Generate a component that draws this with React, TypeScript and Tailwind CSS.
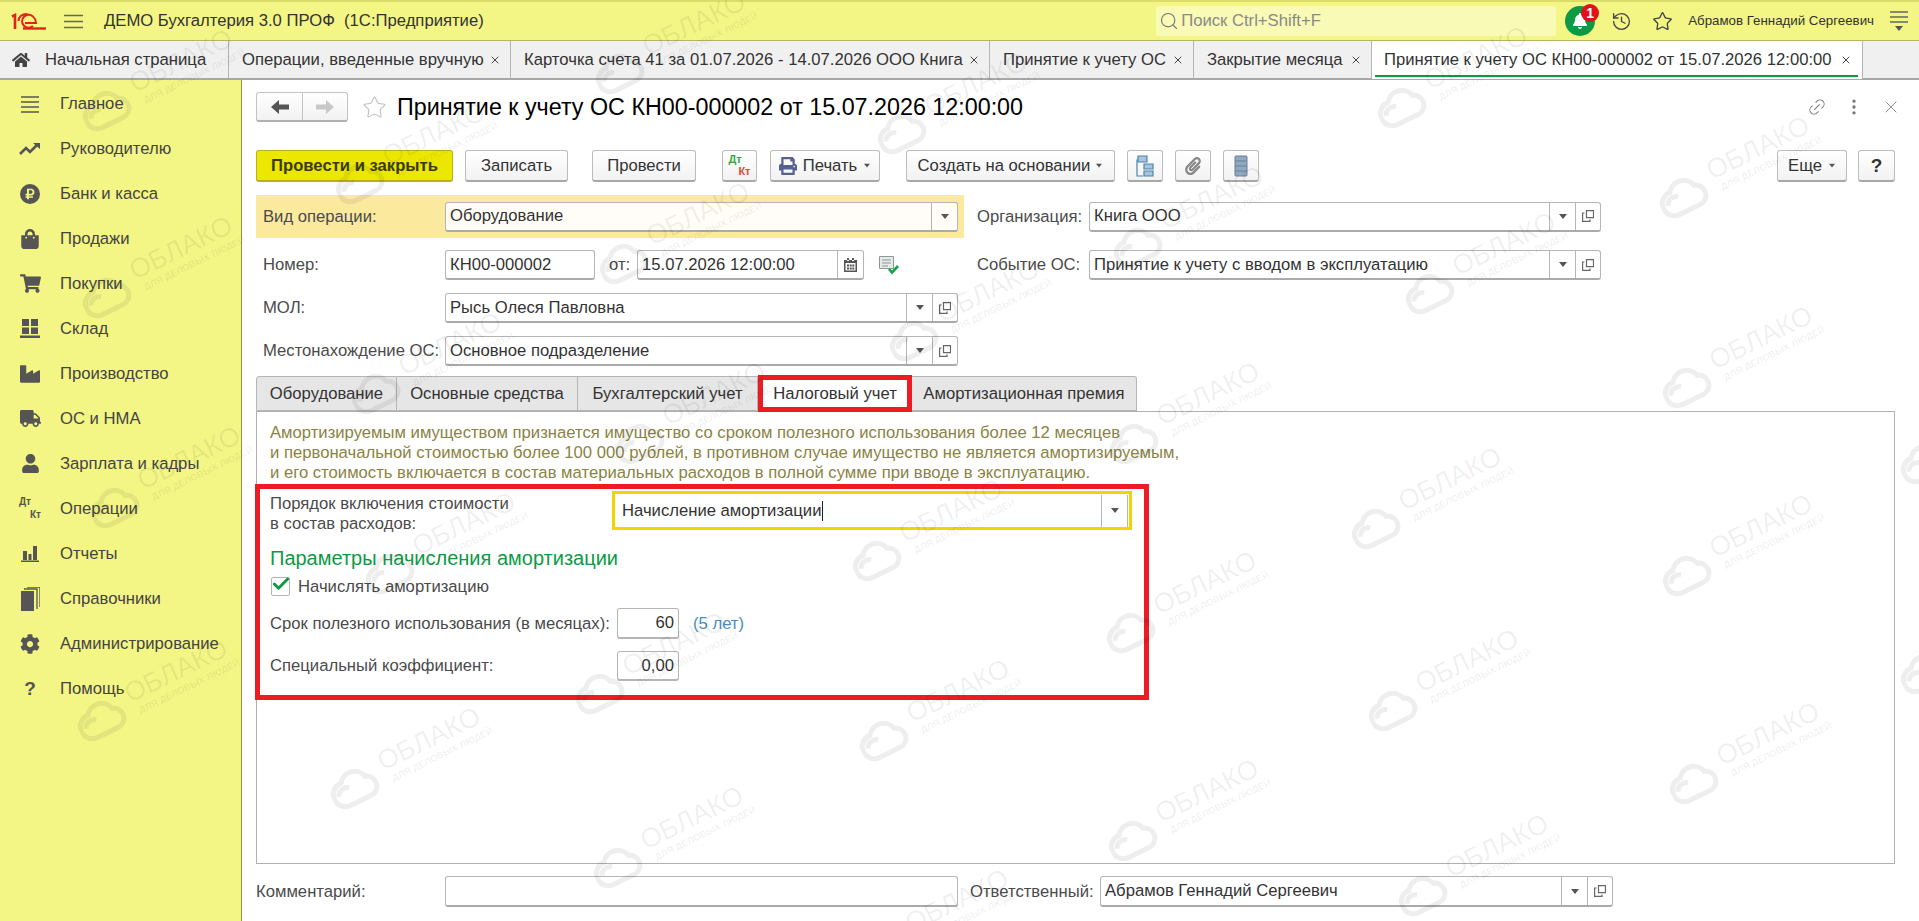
import type { ReactNode } from "react";
import { History, Link2, MoreVertical, Star, X, Check, Search } from "lucide-react";
import {
  FaBell,
  FaCog,
  FaHome,
  FaIndustry,
  FaPaperclip,
  FaPrint,
  FaRubleSign,
  FaShoppingBag,
  FaShoppingCart,
  FaTruck,
  FaUser,
} from "react-icons/fa";

const ink = "#555555";

const MenuLines = () => (
  <svg width="20" height="18" viewBox="0 0 20 18" fill="none" stroke={ink} strokeWidth="1.6">
    <path d="M1 2h18M1 7h18M1 12h18M1 17h18" />
  </svg>
);

const Trend = () => (
  <svg width="22" height="14" viewBox="0 0 22 14" fill="none" stroke={ink} strokeWidth="2.6">
    <path d="M1 12l6-6 4 4 7-7" />
    <path d="M14 1h7v6z" fill={ink} stroke="none" />
  </svg>
);

const Ruble = () => (
  <span className="w-[20px] h-[20px] rounded-full bg-[#555555] flex items-center justify-center text-[#f3f585]">
    <FaRubleSign size={12} />
  </span>
);

const Warehouse = () => (
  <svg width="20" height="19" viewBox="0 0 20 19" fill={ink}>
    <path d="M2 0h7v7H2zM11 0h7v7h-7zM2 8.500h7v6.500H2zM11 8.500h7V15h-7zM0 16.500h20V19H0z" />
  </svg>
);

const Bars = () => (
  <svg width="18" height="17" viewBox="0 0 18 17" fill={ink}>
    <path d="M2 6h4v9H2zM7.500 9h3v6h-3zM12 1h4v14h-4zM0 15.500h18V17H0z" />
  </svg>
);

const Pages = () => (
  <svg width="19" height="24" viewBox="0 0 19 24" fill="none">
    <path d="M0 4h13v20H0z" fill={ink} />
    <path d="M3 2h13v20M6 0h13v20" stroke={ink} strokeWidth="1.300" />
  </svg>
);

const DtKt = ({ green = ink, red = ink, size = "text-[10px]" }: { green?: string; red?: string; size?: string }) => (
  <span className={`relative block w-[22px] h-[23px] font-bold leading-none ${size}`}>
    <span className="absolute left-0 top-0" style={{ color: green }}>
      Дт
    </span>
    <span className="absolute right-0 bottom-0" style={{ color: red }}>
      Кт
    </span>
  </span>
);

const sidebar: { label: string; icon: ReactNode }[] = [
  { label: "Главное", icon: <MenuLines /> },
  { label: "Руководителю", icon: <Trend /> },
  { label: "Банк и касса", icon: <Ruble /> },
  { label: "Продажи", icon: <FaShoppingBag size={20} color={ink} /> },
  { label: "Покупки", icon: <FaShoppingCart size={21} color={ink} /> },
  { label: "Склад", icon: <Warehouse /> },
  { label: "Производство", icon: <FaIndustry size={20} color={ink} /> },
  { label: "ОС и НМА", icon: <FaTruck size={21} color={ink} /> },
  { label: "Зарплата и кадры", icon: <FaUser size={19} color={ink} /> },
  { label: "Операции", icon: <DtKt /> },
  { label: "Отчеты", icon: <Bars /> },
  { label: "Справочники", icon: <Pages /> },
  { label: "Администрирование", icon: <FaCog size={20} color={ink} /> },
  { label: "Помощь", icon: <span className="text-[19px] font-bold text-[#555555]">?</span> },
];

const tabs = [
  { label: "Операции, введенные вручную", w: "w-[282px]" },
  { label: "Карточка счета 41 за 01.07.2026 - 14.07.2026 ООО Книга", w: "w-[479px]" },
  { label: "Принятие к учету ОС", w: "w-[204px]" },
  { label: "Закрытие месяца", w: "w-[178px]" },
];

// centre of the word on the page
const marks = [
  [180, 60], [433, 133], [693, 23], [180, 247], [975, 83], [697, 213], [1211, 197], [987, 290],
  [1475, 57], [1757, 147], [1503, 243], [1760, 337], [188, 457], [449, 343], [463, 523], [175, 670],
  [673, 643], [713, 393], [950, 510], [1204, 582], [957, 690], [1207, 393], [1449, 478], [1760, 525],
  [1466, 660], [1767, 733], [428, 738], [691, 817], [1206, 790], [1496, 845], [956, 900], [1998, 413], [1998, 623],
];

function Watermark({ x, y }: { x: number; y: number }) {
  return (
    <div
      className="absolute flex items-center gap-[8px] w-[190px] h-[40px] -rotate-[26deg] origin-[113px_14px] text-black/[0.065]"
      style={{ left: x - 113, top: y - 14 }}
    >
      <svg width="50" height="40" viewBox="0 0 54 42" fill="none" stroke="currentColor" strokeWidth="5.500" className="shrink-0 mt-[10px]">
        <path d="M14 38h26a11 11 0 0 0 3-21.500A15 15 0 0 0 16 12a13 13 0 0 0-2 26zM8 24a9 9 0 0 1 14-4" />
      </svg>
      <div className="leading-none whitespace-nowrap">
        <div className="text-[27px] leading-[28px]">ОБЛАКО</div>
        <div className="text-[9.500px] leading-[11px] ml-[5px] font-bold">ДЛЯ ДЕЛОВЫХ ЛЮДЕЙ</div>
      </div>
    </div>
  );
}

const Caret = () => (
  <span className="block w-0 h-0 border-l-[4px] border-r-[4px] border-t-[5px] border-l-transparent border-r-transparent border-t-[#555555]" />
);

const OpenIcon = () => (
  <svg width="12" height="12" viewBox="0 0 12 12" fill="none" stroke="#666666" strokeWidth="1.200">
    <path d="M4.500 .6h7v7h-7zM2.500 3H.6v8.400H8V9.500" />
  </svg>
);

function Field({
  w,
  value = "",
  pick = false,
  open = false,
  tall = false,
  children,
}: {
  w: string;
  value?: string;
  pick?: boolean;
  open?: boolean;
  tall?: boolean;
  children?: ReactNode;
}) {
  return (
    <div
      className={`${w} ${tall ? "h-[31px]" : "h-[30px]"} shrink-0 flex items-stretch bg-white/90 border border-[#b5b5b5] border-b-[2px] border-b-[#aaaaaa] rounded-[3px] text-[#333333]`}
    >
      <div className="flex-1 min-w-0 flex items-center pl-[4px] whitespace-nowrap overflow-hidden">{value}</div>
      {pick && (
        <div className="w-[26px] border-l border-[#b5b5b5] flex items-center justify-center">
          <Caret />
        </div>
      )}
      {open && (
        <div className="w-[25px] border-l border-[#b5b5b5] flex items-center justify-center">
          <OpenIcon />
        </div>
      )}
      {children}
    </div>
  );
}

function Btn({ w, children, className = "" }: { w: string; children: ReactNode; className?: string }) {
  return (
    <button
      className={`${w} h-[32px] shrink-0 flex items-center justify-center gap-[6px] rounded-[3px] border border-[#bdbdbd] border-b-[2px] border-b-[#a8a8a8] bg-gradient-to-b from-white to-[#f2f2f2] text-[#333333] ${className}`}
    >
      {children}
    </button>
  );
}

const Label = ({ w, children, className = "" }: { w: string; children: ReactNode; className?: string }) => (
  <div className={`${w} shrink-0 text-[#4b4b4b] whitespace-nowrap ${className}`}>{children}</div>
);

export default function App() {
  return (
    <div className="relative w-[1919px] h-[921px] overflow-hidden bg-white font-['Liberation_Sans',Arial,sans-serif] text-[16.670px] leading-[20px]">
      {/* top bar */}
      <header className="h-[41px] flex items-center bg-[#f3f585] border-t-2 border-t-[#dcdc6a] border-b border-b-[#b5b56a] text-[#333333]">
        <svg width="35" height="18" viewBox="0 0 35 18" fill="none" stroke="#e2231a" className="ml-[11px] shrink-0">
          <path d="M1 4.500l3-1.500v14" strokeWidth="2.600" />
          <path d="M22 4.500a6.500 6.500 0 1 0 0 9.500M7.500 9c0-9 16-10 17.500 2h-11" strokeWidth="2" />
          <path d="M12 16.500h23" strokeWidth="2.400" />
        </svg>
        <svg width="19" height="15" viewBox="0 0 19 15" stroke="#666666" strokeWidth="1.400" className="ml-[18px] shrink-0">
          <path d="M0 1.500h19M0 7.500h19M0 13.500h19" />
        </svg>
        <span className="ml-[21px] whitespace-pre">ДЕМО Бухгалтерия 3.0 ПРОФ  (1С:Предприятие)</span>
        <div className="ml-auto w-[400px] h-[30px] rounded-[3px] bg-[#f8fab5] flex items-center pl-[3px] text-[#8a8a8a]">
          <Search size={20} strokeWidth={1.400} className="text-[#777777]" />
          <span className="ml-[2px]">Поиск Ctrl+Shift+F</span>
        </div>
        <div className="relative ml-[9px] w-[30px] h-[30px] rounded-full bg-[#0d9a45] flex items-center justify-center text-white">
          <FaBell size={16} />
          <span className="absolute -top-[2px] -right-[4px] w-[18px] h-[18px] rounded-full bg-[#e2101a] text-[14px] font-bold leading-[18px] text-center">
            1
          </span>
        </div>
        <History size={21} strokeWidth={1.500} className="ml-[16px] text-[#444444]" />
        <Star size={21} strokeWidth={1.500} className="ml-[20px] text-[#444444]" />
        <span className="ml-[15px] text-[13.300px] whitespace-nowrap">Абрамов Геннадий Сергеевич</span>
        <svg width="18" height="20" viewBox="0 0 18 20" fill="none" stroke="#666666" strokeWidth="1.400" className="ml-[16px] mr-[11px]">
          <path d="M0 1h18M0 6h18M0 11h18" />
          <path d="M5 15h8l-4 5z" fill="#555555" stroke="none" />
        </svg>
      </header>

      {/* open windows */}
      <nav className="h-[39px] flex bg-[#f0f0f0] border-b-2 border-b-[#a8a8a8] text-[#333333]">
        <div className="w-[229px] flex items-center border-r border-[#b5b5b5]">
          <FaHome size={18} color="#444444" className="ml-[12px]" />
          <span className="ml-[15px]">Начальная страница</span>
        </div>
        {tabs.map((t) => (
          <div key={t.label} className={`${t.w} flex items-center justify-between pl-[13px] pr-[9px] border-r border-[#b5b5b5] whitespace-nowrap`}>
            <span>{t.label}</span>
            <X size={12} strokeWidth={2} className="text-[#444444]" />
          </div>
        ))}
        <div className="relative w-[491px] flex items-center justify-between pl-[12px] pr-[10px] bg-white border-r border-[#b5b5b5] -mb-[1px]">
          <span className="whitespace-nowrap">Принятие к учету ОС КН00-000002 от 15.07.2026 12:00:00</span>
          <X size={12} strokeWidth={2} className="text-[#444444]" />
          <span className="absolute left-[3px] right-[4px] bottom-[2px] h-[2px] bg-[#0d9a45]" />
        </div>
      </nav>

      <div className="flex h-[841px]">
        {/* sections */}
        <aside className="w-[242px] shrink-0 bg-[#f3f585] border-r border-r-[#9a9440] pt-[1px] text-[#444444]">
          {sidebar.map((s) => (
            <div key={s.label} className="h-[45px] flex items-center">
              <span className="w-[60px] flex items-center justify-center">{s.icon}</span>
              <span className="whitespace-nowrap">{s.label}</span>
            </div>
          ))}
        </aside>

        {/* document form */}
        <main className="flex-1 min-w-0 pl-[14px] pr-[24px]">
          <div className="mt-[12px] h-[30px] flex items-center">
            <div className="w-[92px] h-[30px] flex rounded-[3px] border border-[#c4c4c4] border-b-[2px] border-b-[#b0b0b0] bg-gradient-to-b from-white to-[#f2f2f2]">
              <span className="w-[46px] border-r border-[#c4c4c4] flex items-center justify-center">
                <svg width="18" height="14" viewBox="0 0 18 14" fill="#555555">
                  <path d="M0 7l8-7v4.500h10v5H8V14z" />
                </svg>
              </span>
              <span className="flex-1 flex items-center justify-center">
                <svg width="18" height="14" viewBox="0 0 18 14" fill="#c8c8c8">
                  <path d="M18 7l-8-7v4.500H0v5h10V14z" />
                </svg>
              </span>
            </div>
            <Star size={25} strokeWidth={1} className="ml-[14px] text-[#bdbdbd]" />
            <h1 className="ml-[10px] text-[23.300px] leading-[30px] text-black whitespace-nowrap">
              Принятие к учету ОС КН00-000002 от 15.07.2026 12:00:00
            </h1>
            <div className="ml-auto -mr-[6px] flex items-center text-[#777777]">
              <Link2 size={20} strokeWidth={1.200} className="-rotate-45" />
              <MoreVertical size={20} strokeWidth={2} className="ml-[17px]" />
              <X size={20} strokeWidth={1} className="ml-[17px]" />
            </div>
          </div>

          <div className="mt-[28px] flex items-center">
            <Btn w="w-[197px]" className="!bg-none !bg-[#ebe700] !border-[#b8b020] font-bold !text-[#3a3a00]">
              Провести и закрыть
            </Btn>
            <Btn w="w-[103px]" className="ml-[12px]">
              Записать
            </Btn>
            <Btn w="w-[104px]" className="ml-[24px]">
              Провести
            </Btn>
            <Btn w="w-[35px]" className="ml-[26px]">
              <DtKt green="#39a845" red="#e0492e" size="text-[11px]" />
            </Btn>
            <Btn w="w-[110px]" className="ml-[13px]">
              <FaPrint size={18} color="#55618f" />
              Печать
              <span className="scale-75">
                <Caret />
              </span>
            </Btn>
            <Btn w="w-[209px]" className="ml-[26px] !gap-[5px]">
              Создать на основании
              <span className="scale-75">
                <Caret />
              </span>
            </Btn>
            <Btn w="w-[36px]" className="ml-[12px]">
              <svg width="18" height="22" viewBox="0 0 18 22" fill="none" stroke="#4b84ad" strokeWidth="1.200">
                <path d="M4 5H1v16h6" />
                <path d="M2 1h9v6H2zM8 9h9v5H8zM8 16h9v5H8z" fill="#a9c5dc" />
              </svg>
            </Btn>
            <Btn w="w-[36px]" className="ml-[12px]">
              <FaPaperclip size={18} color="#888888" />
            </Btn>
            <Btn w="w-[36px]" className="ml-[12px]">
              <svg width="14" height="22" viewBox="0 0 14 22" fill="#8fa9c4" stroke="#6c7f93" strokeWidth="1">
                <rect x="1" y="1" width="12" height="20" rx="1" />
                <path d="M1 6h12M1 11h12M1 16h12" />
              </svg>
            </Btn>
            <Btn w="w-[70px]" className="ml-auto">
              Еще
              <span className="scale-75">
                <Caret />
              </span>
            </Btn>
            <Btn w="w-[37px]" className="ml-[11px] text-[19px] font-bold">
              ?
            </Btn>
          </div>

          <div className="mt-[13px] h-[43px] flex items-center">
            <div className="w-[708px] h-full flex items-center bg-[#fbe99e]">
              <Label w="w-[189px]" className="pl-[7px]">
                Вид операции:
              </Label>
              <Field w="w-[513px]" value="Оборудование" pick />
            </div>
            <Label w="w-[112px]" className="ml-[13px]">
              Организация:
            </Label>
            <Field w="w-[512px]" value="Книга ООО" pick open />
          </div>

          <div className="mt-[12px] flex items-center">
            <Label w="w-[189px]" className="pl-[7px]">
              Номер:
            </Label>
            <Field w="w-[150px]" value="КН00-000002" />
            <Label w="w-[42px]" className="pl-[14px]">
              от:
            </Label>
            <Field w="w-[227px]" value="15.07.2026 12:00:00">
              <div className="w-[26px] border-l border-[#b5b5b5] flex items-center justify-center">
                <svg width="13" height="14" viewBox="0 0 13 14" fill="#555555">
                  <path d="M0 2h13v12H0zM1.500 5v7.500h10V5zM3 0h2v3H3zM8 0h2v3H8zM3 6.500h2v2H3zM5.700 6.500h2v2h-2zM8.300 6.500h2v2h-2zM3 9.500h2v2H3zM5.700 9.500h2v2h-2zM8.300 9.500h2v2h-2z" fillRule="evenodd" />
                </svg>
              </div>
            </Field>
            <svg width="20" height="19" viewBox="0 0 20 19" className="ml-[15px] shrink-0" fill="none">
              <path d="M.5.5h14v12H.5z" fill="#e6eae8" stroke="#8a9a92" />
              <path d="M3 4h9M3 7h9M3 10h6" stroke="#8a9a92" />
              <path d="M10 13l3 3.500 6-6.500" stroke="#17a34a" strokeWidth="2.600" />
            </svg>
            <Label w="w-[112px]" className="ml-[78px]">
              Событие ОС:
            </Label>
            <Field w="w-[512px]" value="Принятие к учету с вводом в эксплуатацию" pick open />
          </div>

          <div className="mt-[13px] flex items-center">
            <Label w="w-[189px]" className="pl-[7px]">
              МОЛ:
            </Label>
            <Field w="w-[513px]" value="Рысь Олеся Павловна" pick open />
          </div>
          <div className="mt-[13px] flex items-center">
            <Label w="w-[189px]" className="pl-[7px]">
              Местонахождение ОС:
            </Label>
            <Field w="w-[513px]" value="Основное подразделение" pick open />
          </div>

          {/* pages */}
          <div className="mt-[11px] h-[35px] flex items-end border-b border-[#b0b0b0] text-[#333333]">
            <div className="w-[141px] h-[35px] flex items-center justify-center bg-[#e6e6e6] border border-[#b5b5b5] rounded-tl-[3px]">Оборудование</div>
            <div className="w-[181px] h-[35px] flex items-center justify-center bg-[#e6e6e6] border border-l-0 border-[#b5b5b5]">Основные средства</div>
            <div className="w-[180px] h-[35px] flex items-center justify-center bg-[#e6e6e6] border border-l-0 border-[#b5b5b5]">Бухгалтерский учет</div>
            <div className="w-[154px] h-[37px] -mb-[1px] flex items-center justify-center bg-white border-[5px] border-[#ed1c24] relative">Налоговый учет</div>
            <div className="w-[225px] h-[35px] flex items-center justify-center bg-[#e6e6e6] border border-l-0 border-[#b5b5b5] rounded-tr-[3px]">Амортизационная премия</div>
          </div>
          <div className="relative h-[452px] border-x border-b border-[#b0b0b0] pl-[13px] pt-[11px]">
            <p className="text-[#8a8344] whitespace-nowrap">
              Амортизируемым имуществом признается имущество со сроком полезного использования более 12 месяцев
              <br />и первоначальной стоимостью более 100 000 рублей, в противном случае имущество не является амортизируемым,
              <br />и его стоимость включается в состав материальных расходов в полной сумме при вводе в эксплуатацию.
            </p>

            <div className="mt-[8px] h-[39px] flex items-start">
              <Label w="w-[342px]" className="pt-[3px]">
                Порядок включения стоимости
                <br />в состав расходов:
              </Label>
              <div className="w-[520px] h-[39px] flex items-center border-[3px] border-[#f2d500] bg-white/90 pl-[7px] text-[#333333]">
                <span className="border-r border-[#222222] pr-[1px]">Начисление амортизации</span>
                <span className="ml-auto h-[32px] w-[27px] border-x border-[#b5b5b5] mr-[1px] flex items-center justify-center">
                  <Caret />
                </span>
              </div>
            </div>

            <h2 className="mt-[16px] text-[20px] leading-[24px] text-[#0d9a45] whitespace-nowrap">Параметры начисления амортизации</h2>

            <div className="mt-[7px] h-[19px] flex items-center">
              <span className="relative w-[19px] h-[19px] ml-[1px] border border-[#b5b5b5] rounded-[2px] bg-white">
                <Check size={20} strokeWidth={3.500} className="absolute -top-[4px] -left-[1px] text-[#0d9a45]" />
              </span>
              <span className="ml-[8px] text-[#4b4b4b]">Начислять амортизацию</span>
            </div>

            <div className="mt-[12px] flex items-center">
              <Label w="w-[347px]">Срок полезного использования (в месяцах):</Label>
              <div className="w-[62px] h-[31px] border border-[#b5b5b5] border-b-[2px] rounded-[3px] flex items-center justify-end pr-[4px] text-[#333333]">60</div>
              <span className="ml-[14px] text-[#4a8cc0]">(5 лет)</span>
            </div>
            <div className="mt-[12px] flex items-center">
              <Label w="w-[347px]">Специальный коэффициент:</Label>
              <div className="w-[62px] h-[30px] border border-[#b5b5b5] border-b-[2px] rounded-[3px] flex items-center justify-end pr-[4px] text-[#333333]">0,00</div>
            </div>

            {/* annotation frame */}
            <div className="absolute left-[-2px] top-[72px] w-[894px] h-[216px] border-[5px] border-[#ed1c24] pointer-events-none" />
          </div>

          <div className="mt-[12px] flex items-center">
            <Label w="w-[189px]">Комментарий:</Label>
            <Field w="w-[513px]" tall />
            <Label w="w-[130px]" className="ml-[12px]">
              Ответственный:
            </Label>
            <Field w="w-[513px]" tall value="Абрамов Геннадий Сергеевич" pick open />
          </div>
        </main>
      </div>

      {/* watermark over the whole page */}
      <div className="absolute inset-0 pointer-events-none">
        {marks.map(([x, y]) => (
          <Watermark key={`${x}-${y}`} x={x} y={y} />
        ))}
      </div>
    </div>
  );
}
